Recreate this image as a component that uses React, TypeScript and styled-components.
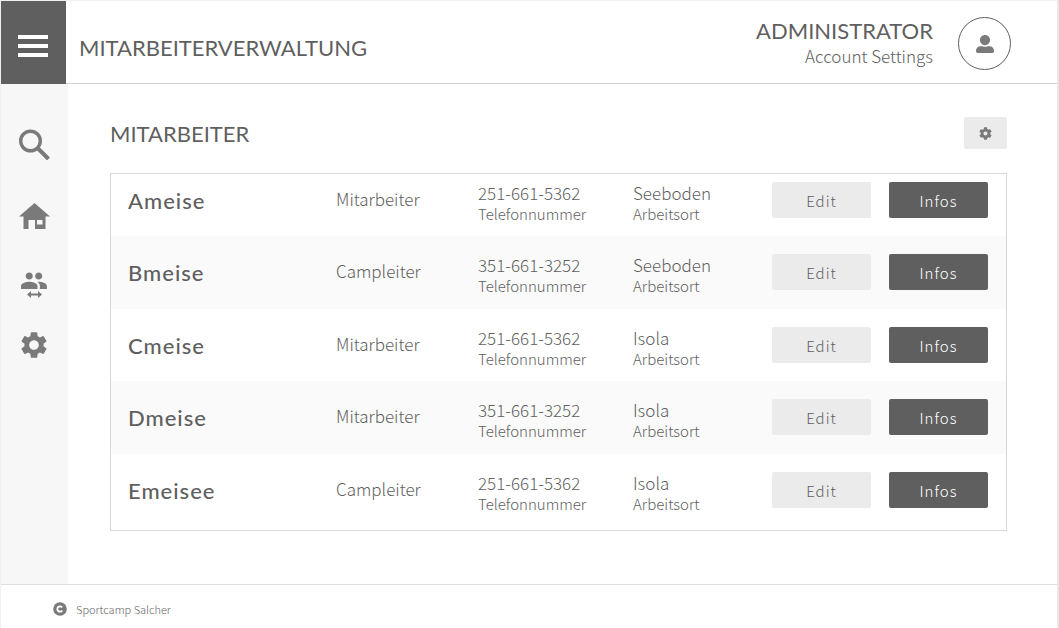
import React from "react";
import styled, { createGlobalStyle } from "styled-components";
import { FaCog, FaUserAlt } from "react-icons/fa";
import { MdPeople, MdSettings } from "react-icons/md";

const GlobalStyle = createGlobalStyle`
  *, *::before, *::after { box-sizing: border-box; }
  body {
    margin: 0;
    background: #fff;
    color: #5f5f5f;
    font-family: "Noto Sans CJK SC", "Noto Sans", sans-serif;
    font-weight: 300;
  }
  h1, h2, p { margin: 0; }
  button { font: inherit; color: inherit; border: 0; padding: 0; cursor: pointer; }
  a { color: inherit; text-decoration: none; }
`;

const Shell = styled.div`
  min-height: 100vh;
  display: flex;
  flex-direction: column;
  border: 1px solid #f0f0f0;
  border-right: 2px solid #e8e8e8;
  border-bottom: 0;
`;

const Header = styled.header`
  display: flex;
  align-items: stretch;
  height: 83px;
  padding-right: 46px;
  border-bottom: 1px solid #d2d2d2;
`;

const MenuButton = styled.button`
  width: 65px;
  height: 83px;
  display: flex;
  flex-direction: column;
  align-items: flex-start;
  justify-content: center;
  gap: 5px;
  padding: 6px 0 0 17px;
  background: #5f5f5f;
`;

const MenuBar = styled.span`
  width: 30px;
  height: 4px;
  background: #fff;
`;

const PageTitle = styled.h1`
  flex: 1;
  padding: 34px 0 0 13px;
  font: 400 22px/26px Lato, sans-serif;
`;

const Account = styled.div`
  padding-top: 17px;
  margin-right: 25px;
  text-align: right;
`;

const AccountName = styled.p`
  font: 400 22px/26px Lato, sans-serif;
`;

const AccountLink = styled.a`
  display: block;
  font-size: 17px;
  line-height: 24px;
`;

const Avatar = styled.button`
  display: grid;
  place-items: center;
  width: 53px;
  height: 53px;
  margin-top: 16px;
  border: 1px solid #5f5f5f;
  border-radius: 50%;
  background: #fff;
  color: #7a7a7a;
`;

const Body = styled.div`
  flex: 1;
  display: flex;
`;

const Sidebar = styled.nav`
  width: 67px;
  padding: 45px 0 0 17px;
  background: #f7f7f7;
  color: #7a7a7a;
`;

const NavLink = styled.a<{ $space: number }>`
  display: flex;
  justify-content: center;
  width: 32px;
  margin-bottom: ${(p) => p.$space}px;
`;

const Main = styled.main`
  flex: 1;
  padding: 33px 50px 53px 42px;
`;

const MainHead = styled.div`
  display: flex;
  align-items: flex-end;
  justify-content: space-between;
  margin-bottom: 24px;
`;

const SectionTitle = styled.h2`
  font: 400 22px/30px Lato, sans-serif;
`;

const SettingsButton = styled.button`
  display: grid;
  place-items: center;
  width: 43px;
  height: 32px;
  border-radius: 2px;
  background: #ebebeb;
  color: #7a7a7a;
`;

const StaffFrame = styled.div`
  border: 1px solid #d8d8d8;
  padding-bottom: 4px;
`;

const StaffTable = styled.table`
  width: 100%;
  table-layout: fixed;
  border-collapse: collapse;
`;

const Col = styled.col<{ $share: number }>`
  width: ${(p) => p.$share}%;
`;

const Row = styled.tr`
  height: 72px;
  &:nth-child(even) { height: 73px; background: #fafafa; }
  &:first-child { height: 62px; }
  & > * { padding: 18px 0 0; vertical-align: top; text-align: left; }
  &:first-child > * { padding-top: 8px; }
`;

const Name = styled.span`
  display: block;
  padding-left: 17px;
  font: 500 22px/38px Lato, sans-serif;
  letter-spacing: 1px;
`;

const Role = styled.span`
  display: block;
  font-weight: 300;
  font-size: 17px;
  line-height: 34px;
`;

const Value = styled.span`
  display: block;
  font-size: 17px;
  line-height: 22px;
`;

const Caption = styled.span`
  display: block;
  font-size: 15px;
  line-height: 20px;
`;

const RowButton = styled.button<{ $dark?: boolean }>`
  display: block;
  width: 99px;
  height: 36px;
  border-radius: 2px;
  font-size: 15px;
  letter-spacing: 1px;
  background: ${(p) => (p.$dark ? "#5f5f5f" : "#ebebeb")};
  color: ${(p) => (p.$dark ? "#fff" : "#5f5f5f")};
`;

const Footer = styled.footer`
  display: flex;
  align-items: center;
  gap: 9px;
  height: 44px;
  padding: 5px 0 0 52px;
  border-top: 1px solid #dedede;
  font-size: 11px;
`;

const SearchIcon = () => (
  <svg width="31" height="31" viewBox="0 0 31 31" fill="none" stroke="currentColor">
    <circle cx="11.5" cy="12" r="9.8" strokeWidth="3.4" />
    <path d="M19 19.5 29.5 30" strokeWidth="4" />
  </svg>
);

const HomeIcon = () => (
  <svg width="31" height="26" viewBox="0 0 31 26" fill="currentColor">
    <path fillRule="evenodd" d="M15.5 0 31 13.5H26.5V26H9.500V17H16V26H9.500H4.500V13.500H0ZM18 17v4.500h5.500V17Z" />
  </svg>
);

const TeamIcon = () => (
  <svg width="27" height="27" viewBox="0 0 27 27" fill="currentColor">
    <g transform="translate(-1.200 -5.500) scale(1.180)">
      <MdPeople size={24} />
    </g>
    <path d="M6 22.500 10 19v2.500h7V19l4 3.500-4 3.500v-2.500h-7V26Z" />
  </svg>
);

const CopyrightIcon = () => (
  <svg width="14" height="14" viewBox="0 0 14 14" fill="none">
    <circle cx="7" cy="7" r="6.800" fill="#7a7a7a" />
    <path d="M9.200 5.400A2.700 2.700 0 1 0 9.200 8.600" stroke="#fff" strokeWidth="1.800" />
  </svg>
);

const staff = [
  { name: "Ameise", role: "Mitarbeiter", phone: "251-661-5362", place: "Seeboden" },
  { name: "Bmeise", role: "Campleiter", phone: "351-661-3252", place: "Seeboden" },
  { name: "Cmeise", role: "Mitarbeiter", phone: "251-661-5362", place: "Isola" },
  { name: "Dmeise", role: "Mitarbeiter", phone: "351-661-3252", place: "Isola" },
  { name: "Emeisee", role: "Campleiter", phone: "251-661-5362", place: "Isola" },
];

const weights = [225, 142, 155, 139, 117, 117];
const total = weights.reduce((sum, w) => sum + w, 0);

export default function App() {
  return (
    <Shell>
      <GlobalStyle />
      <Header>
        <MenuButton aria-label="Menü">
          <MenuBar />
          <MenuBar />
          <MenuBar />
        </MenuButton>
        <PageTitle>MITARBEITERVERWALTUNG</PageTitle>
        <Account>
          <AccountName>ADMINISTRATOR</AccountName>
          <AccountLink href="#account">Account Settings</AccountLink>
        </Account>
        <Avatar aria-label="Profil">
          <FaUserAlt size={18} />
        </Avatar>
      </Header>
      <Body>
        <Sidebar>
          <NavLink href="#suche" aria-label="Suche" $space={43}><SearchIcon /></NavLink>
          <NavLink href="#start" aria-label="Start" $space={43}><HomeIcon /></NavLink>
          <NavLink href="#team" aria-label="Team" $space={30}><TeamIcon /></NavLink>
          <NavLink href="#einstellungen" aria-label="Einstellungen" $space={0}><MdSettings size={32} /></NavLink>
        </Sidebar>
        <Main>
          <MainHead>
            <SectionTitle>MITARBEITER</SectionTitle>
            <SettingsButton aria-label="Liste einstellen"><FaCog size={13} /></SettingsButton>
          </MainHead>
          <StaffFrame>
            <StaffTable>
              <colgroup>
                {weights.map((w, i) => <Col key={i} $share={(w / total) * 100} />)}
              </colgroup>
              <tbody>
                {staff.map((s) => (
                  <Row key={s.name}>
                    <th scope="row"><Name>{s.name}</Name></th>
                    <td><Role>{s.role}</Role></td>
                    <td><Value>{s.phone}</Value><Caption>Telefonnummer</Caption></td>
                    <td><Value>{s.place}</Value><Caption>Arbeitsort</Caption></td>
                    <td><RowButton>Edit</RowButton></td>
                    <td><RowButton $dark>Infos</RowButton></td>
                  </Row>
                ))}
              </tbody>
            </StaffTable>
          </StaffFrame>
        </Main>
      </Body>
      <Footer>
        <CopyrightIcon />
        <span>Sportcamp Salcher</span>
      </Footer>
    </Shell>
  );
}
